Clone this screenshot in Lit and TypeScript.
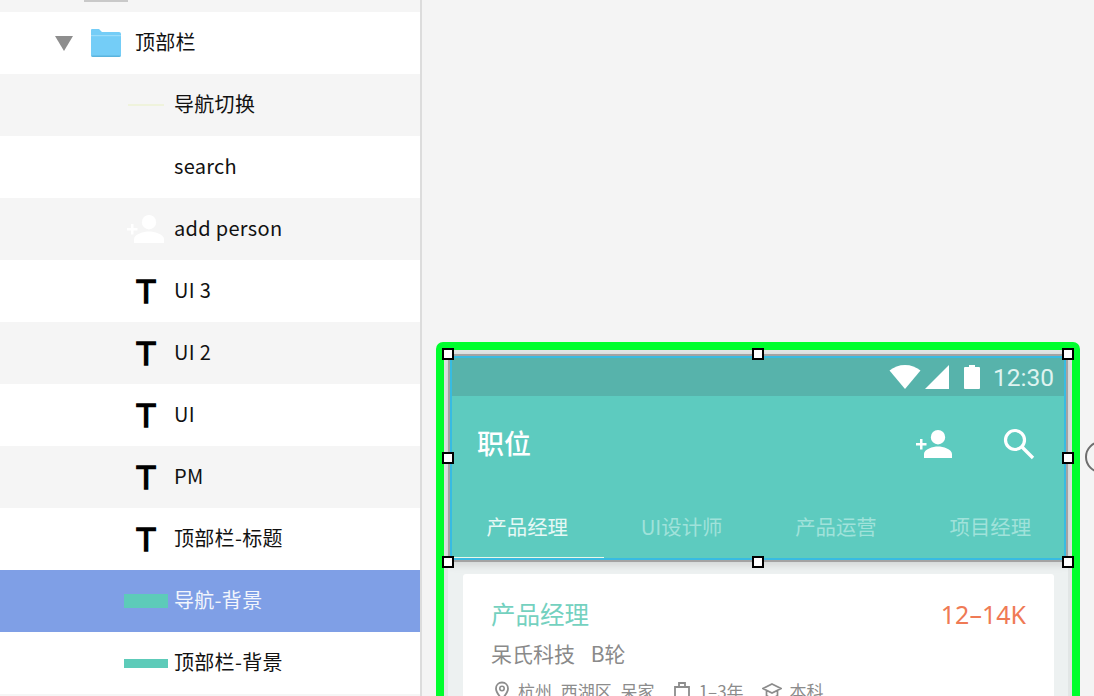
import { LitElement, html, css } from "lit";
import { customElement } from "lit/decorators.js";

const T = html`<span class="tglyph">T</span>`;
const rows = [
  { name: "导航切换", icon: html`<span class="navline"></span>`, alt: true },
  { name: "search", icon: html``, alt: false },
  { name: "add person", icon: html`<svg class="addp" width="40" height="30" viewBox="0 0 40 30"><path fill="#fff" d="M23 1a7.200 7.200 0 1 1 0 14.400a7.200 7.200 0 0 1 0-14.400zM8 29v-4c0-5 10-7.500 15-7.500s15 2.500 15 7.500v4zM5 10v4H1v2.500h4v4h2.500v-4h4V14h-4v-4z"/></svg>`, alt: true },
  { name: "UI 3", icon: T, alt: false },
  { name: "UI 2", icon: T, alt: true },
  { name: "UI", icon: T, alt: false },
  { name: "PM", icon: T, alt: true },
  { name: "顶部栏-标题", icon: T, alt: false },
  { name: "导航-背景", icon: html`<span class="bar"></span>`, alt: false, sel: true },
  { name: "顶部栏-背景", icon: html`<span class="bar thin"></span>`, alt: false },
];
const handles = [
  [0, 0], [310, 0], [620, 0],
  [0, 104], [620, 104],
  [0, 208], [310, 208], [620, 208],
];

@customElement("app-root")
export class AppRoot extends LitElement {
  static styles = css`
    :host {
      display: flex;
      width: 1094px;
      height: 696px;
      overflow: hidden;
      background: #f4f4f4;
      font-family: "Noto Sans CJK SC", "Noto Sans", sans-serif;
    }
    .side {
      width: 420px;
      flex: none;
      box-sizing: content-box;
      border-right: 2px solid #dcdcdc;
      padding-top: 12px;
      background: #f5f5f5;
      position: relative;
    }
    .topmark {
      position: absolute;
      left: 84px;
      top: 0;
      width: 44px;
      height: 2px;
      background: #c9c9c9;
    }
    .row {
      height: 62px;
      display: flex;
      align-items: center;
      background: #fff;
      color: #111;
      font-size: 20px;
      line-height: 1;
      letter-spacing: 0.3px;
    }
    .row.alt { background: #f5f5f5; }
    .row.sel { background: #7f9fe6; color: #f2f5fc; }
    .row .slot {
      width: 124px;
      flex: none;
    }
    .row .icon {
      width: 50px;
      flex: none;
      display: flex;
      align-items: center;
    }
    .label { margin-bottom: 2px; }
    .tri {
      width: 0; height: 0;
      margin-left: 55px;
      border-left: 9px solid transparent;
      border-right: 9px solid transparent;
      border-top: 15px solid #8e8e8e;
    }
    .folder { margin-left: 17px; flex: none; }
    .parent { margin-left: 13px; margin-bottom: 2px; }
    .tglyph {
      font-family: "Liberation Sans", sans-serif;
      font-weight: 400;
      -webkit-text-stroke: 1.300px #000;
      font-size: 33px;
      line-height: 1;
      color: #000;
      margin-left: 12px;
      letter-spacing: 0;
    }
    .bar {
      display: block;
      width: 44px;
      height: 14px;
      background: #5dcbb9;
    }
    .bar.thin { height: 9px; }
    .navline {
      display: block;
      width: 36px;
      height: 2px;
      margin-left: 4px;
      background: #eff3dc;
    }
    .addp { margin-left: 2px; margin-top: -1px; }

    .canvas { flex: 1; position: relative; }
    .frame {
      position: absolute;
      left: 14px;
      top: 342px;
      width: 644px;
      height: 400px;
      box-sizing: border-box;
      border: 8px solid #00ff2d;
      border-radius: 7px;
      background: #e2e6e6;
    }
    .phone {
      position: absolute;
      left: 4px;
      top: 4px;
      width: 620px;
      height: 400px;
      box-sizing: border-box;
      background: #edf1f1;
    }
    .top {
      height: 208px;
      box-sizing: border-box;
      border: 2px solid #a3a3a3;
      box-shadow: 0 3px 8px rgba(0,0,0,.12);
      position: relative;
    }
    .inner {
      height: 100%;
      box-sizing: border-box;
      border: 2px solid #38bbe2;
      display: flex;
      flex-direction: column;
    }
    .status {
      height: 38px;
      flex: none;
      background: #57b3ab;
      display: flex;
      align-items: center;
      justify-content: flex-end;
      padding-right: 10px;
      color: #dff3f0;
      font-family: Roboto, sans-serif;
      font-size: 24.500px;
    }
    .status svg { flex: none; display: block; }
    .wifi { margin-right: 4px; }
    .sig { margin-right: 15px; }
    .batt { margin-right: 13px; }
    .appbar {
      flex: 1;
      background: #5dcbbf;
      display: flex;
      flex-direction: column;
      color: #fff;
    }
    .title {
      height: 96px;
      flex: none;
      display: flex;
      align-items: center;
      padding-left: 25px;
      font-size: 27px;
      font-weight: 500;
    }
    .title .t { margin-bottom: 4px; }
    .spacer { flex: 1; }
    .tbicon { flex: none; display: block; }
    .ic1 { margin-right: 48px; }
    .ic2 { margin-right: 29px; }
    .tabs {
      flex: 1;
      display: flex;
      position: relative;
      font-size: 20.400px;
      margin-left: -2px;
    }
    .tab {
      width: 154.400px;
      flex: none;
      text-align: center;
      padding-top: 20px;
      color: #a0e2da;
      line-height: 28px;
    }
    .tab.on { color: #e6f8f5; }
    .tab.on::after {
      content: "";
      position: absolute;
      left: 2px;
      bottom: 0;
      width: 152px;
      height: 1px;
      background: #e9f8e8;
    }
    .card {
      position: absolute;
      left: 15px;
      top: 220px;
      width: 591px;
      height: 180px;
      background: #fff;
      border-radius: 3px;
      box-sizing: border-box;
      padding: 23px 28px 0;
      color: #8a8a8a;
    }
    .line1 {
      display: flex;
      justify-content: space-between;
      align-items: center;
      font-size: 24.500px;
      line-height: 34px;
      color: #74d1bf;
    }
    .salary { color: #ef7a55; font-family: "Noto Sans", sans-serif; font-size: 25px; }
    .line2 {
      font-size: 21px;
      line-height: 28px;
      margin-top: 8px;
      word-spacing: 11px;
    }
    .line3 {
      display: flex;
      align-items: center;
      font-size: 17px;
      line-height: 22px;
      margin-top: 13px;
      color: #8c8c8c;
    }
    .line3 svg { flex: none; margin: 0 8px 0 3px; }
    .line3 span { margin-right: 15px; white-space: pre; word-spacing: 5px; }

    .handle {
      position: absolute;
      width: 12px;
      height: 12px;
      box-sizing: border-box;
      background: #fff;
      border: 2px solid #000;
      margin: -6px 0 0 -6px;
    }
    .handles { position: absolute; left: 26px; top: 354px; }
    .dot {
      position: absolute;
      left: 663px;
      top: 441px;
      width: 32px;
      height: 32px;
      box-sizing: border-box;
      border: 2px solid #6e6e6e;
      border-radius: 50%;
      background: #f4f4f4;
    }
  `;

  render() {
    return html`
      <div class="side">
        <div class="topmark"></div>
        <div class="row">
          <div class="tri"></div>
          <svg class="folder" width="32" height="30" viewBox="0 0 32 30">
            <path fill="#74cdf7" d="M2 1h7l3 3h17a2 2 0 0 1 2 2v21a2 2 0 0 1-2 2H3a2 2 0 0 1-2-2V2a1 1 0 0 1 1-1z"/>
            <path fill="#9adcfa" d="M1 7h30v1.200H1z"/>
            <path fill="#5ab4de" d="M1 27.500h30V27a2 2 0 0 1-2 2H3a2 2 0 0 1-2-2z"/>
          </svg>
          <span class="parent">顶部栏</span>
        </div>
        ${rows.map(
          (r) => html`<div class="row ${r.alt ? "alt" : ""} ${r.sel ? "sel" : ""}">
            <div class="slot"></div>
            <div class="icon">${r.icon}</div>
            <span class="label">${r.name}</span>
          </div>`
        )}
      </div>
      <div class="canvas">
        <div class="frame">
          <div class="phone">
            <div class="top">
              <div class="inner">
                <div class="status">
                  <svg class="wifi" width="32" height="24" viewBox="0 0 32 24"><path fill="#fff" d="M16 24L0.500 5.500C5 2 10 0 16 0s11 2 15.500 5.500z"/></svg>
                  <svg class="sig" width="24" height="24" viewBox="0 0 24 24"><path fill="#fff" d="M0 24L24 0v24z"/></svg>
                  <svg class="batt" width="16" height="24" viewBox="0 0 16 24"><path fill="#fff" d="M5 0h6v2h4a1 1 0 0 1 1 1v20a1 1 0 0 1-1 1H1a1 1 0 0 1-1-1V3a1 1 0 0 1 1-1h4z"/></svg>
                  12:30
                </div>
                <div class="appbar">
                  <div class="title">
                    <span class="t">职位</span>
                    <div class="spacer"></div>
                    <svg class="tbicon ic1" width="40" height="30" viewBox="0 0 40 30"><path fill="#fff" d="M23 1a7.200 7.200 0 1 1 0 14.400a7.200 7.200 0 0 1 0-14.400zM9 29v-4c0-5 9-7.500 14-7.500s14 2.500 14 7.500v4zM5 10v4H1v2.500h4v4h2.500v-4h4V14h-4v-4z"/></svg>
                    <svg class="tbicon ic2" width="32" height="32" viewBox="0 0 32 32"><circle cx="12" cy="12" r="9.500" fill="none" stroke="#fff" stroke-width="3.200"/><path d="M19 19l11 11" stroke="#fff" stroke-width="3.400" fill="none"/></svg>
                  </div>
                  <div class="tabs">
                    <div class="tab on">产品经理</div>
                    <div class="tab">UI设计师</div>
                    <div class="tab">产品运营</div>
                    <div class="tab">项目经理</div>
                  </div>
                </div>
              </div>
            </div>
            <div class="card">
              <div class="line1"><span>产品经理</span><span class="salary">12–14K</span></div>
              <div class="line2">呆氏科技 B轮</div>
              <div class="line3">
                <svg width="16" height="20" viewBox="0 0 16 20"><path fill="none" stroke="#8c8c8c" stroke-width="1.800" d="M8 1.500c3.600 0 6 2.700 6 6 0 4-6 10.500-6 10.500S2 11.500 2 7.500c0-3.300 2.400-6 6-6z"/><circle cx="8" cy="7.500" r="2.200" fill="none" stroke="#8c8c8c" stroke-width="1.600"/></svg>
                <span>杭州 西湖区 呆家</span>
                <svg width="18" height="20" viewBox="0 0 18 20"><path fill="none" stroke="#8c8c8c" stroke-width="1.800" d="M2 6h14v12H2zM6 6V2h6v4"/></svg>
                <span>1–3年</span>
                <svg width="20" height="18" viewBox="0 0 20 18"><path fill="none" stroke="#8c8c8c" stroke-width="1.700" d="M10 2l9 4.500L10 11 1 6.500zM4.500 9v4.500c3 2.500 8 2.500 11 0V9"/></svg>
                <span>本科</span>
              </div>
            </div>
          </div>
        </div>
        <div class="dot"></div>
        <div class="handles">
          ${handles.map(([x, y]) => html`<div class="handle" style="left:${x}px;top:${y}px"></div>`)}
        </div>
      </div>
    `;
  }
}
